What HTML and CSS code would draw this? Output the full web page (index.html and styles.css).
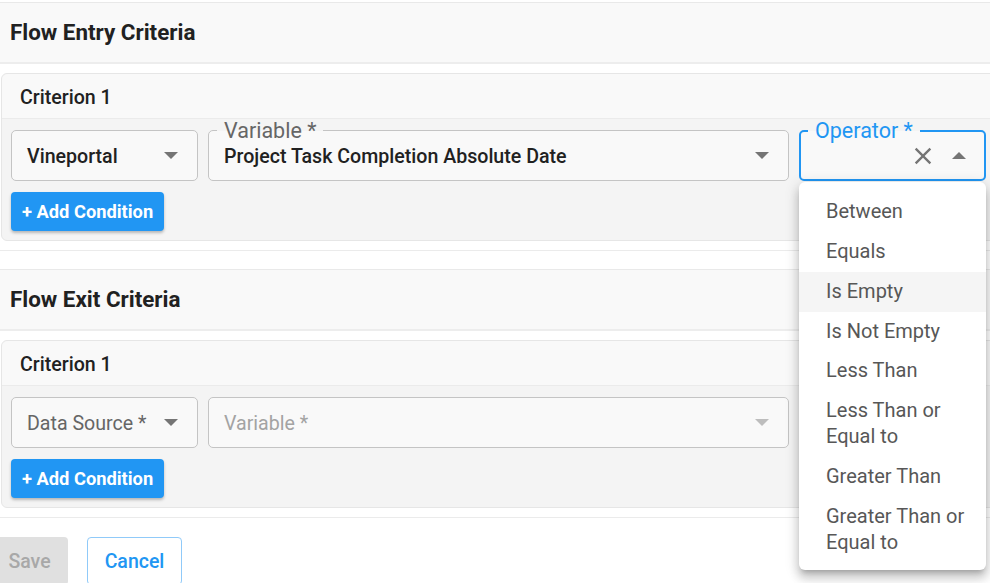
FILE: index.html
```html
<!DOCTYPE html>
<html lang="en">
<head>
<meta charset="utf-8">
<title>Flow Criteria</title>
<link rel="stylesheet" href="styles.css">
</head>
<body>
<div class="page">
  <section class="section">
    <div class="section-head"><h2 class="section-title">Flow Entry Criteria</h2></div>
    <div class="section-body">
      <div class="criterion">
        <div class="crit-head">Criterion 1</div>
        <div class="crit-body">
          <div class="fields">
            <div class="field">
              <span class="value">Vineportal</span>
              <span class="arrow-down"></span>
            </div>
            <div class="field">
              <span class="label">Variable *</span>
              <span class="value">Project Task Completion Absolute Date</span>
              <span class="arrow-down"></span>
            </div>
            <div class="field field-focus">
              <span class="label label-focus">Operator *</span>
              <svg class="clear-icon" width="28" height="28" viewBox="0 0 24 24"><path d="M19 6.41 17.59 5 12 10.59 6.41 5 5 6.41 10.59 12 5 17.59 6.41 19 12 13.41 17.59 19 19 17.59 13.41 12z" fill="#757575"/></svg>
              <span class="arrow-up"></span>
              <ul class="menu">
                <li class="menu-item">Between</li>
                <li class="menu-item">Equals</li>
                <li class="menu-item menu-item-hover">Is Empty</li>
                <li class="menu-item">Is Not Empty</li>
                <li class="menu-item">Less Than</li>
                <li class="menu-item">Less Than or Equal to</li>
                <li class="menu-item">Greater Than</li>
                <li class="menu-item">Greater Than or Equal to</li>
              </ul>
            </div>
          </div>
          <button class="add-btn">+ Add Condition</button>
        </div>
      </div>
    </div>
  </section>

  <section class="section">
    <div class="section-head"><h2 class="section-title">Flow Exit Criteria</h2></div>
    <div class="section-body">
      <div class="criterion">
        <div class="crit-head">Criterion 1</div>
        <div class="crit-body">
          <div class="fields">
            <div class="field">
              <span class="value placeholder">Data Source *</span>
              <span class="arrow-down"></span>
            </div>
            <div class="field">
              <span class="value placeholder-disabled">Variable *</span>
              <span class="arrow-down arrow-disabled"></span>
            </div>
            <div class="field-empty"></div>
          </div>
          <button class="add-btn">+ Add Condition</button>
        </div>
      </div>
    </div>
  </section>

  <div class="actions">
    <button class="btn-save">Save</button>
    <button class="btn-cancel">Cancel</button>
  </div>
</div>
</body>
</html>
```
FILE: styles.css
```css
html, body {
  margin: 0;
  padding: 0;
  overflow: hidden;
  background: #ffffff;
}
body {
  font-family: Roboto, "Liberation Sans", sans-serif;
  color: #212121;
}
.page {
  width: 997px;
  padding-top: 2px;
}
.section {
  border-top: 1px solid #e9e9e9;
  border-bottom: 1px solid #ebebeb;
  background: #ffffff;
}
.section + .section {
  margin-top: 18px;
}
.section-head {
  background: #f9f9f9;
  height: 59px;
  box-sizing: content-box;
  display: flex;
  align-items: center;
  padding-left: 10px;
  border-bottom: 2px solid #ededed;
}
.section-title {
  margin: 0 0 2px;
  font-size: 22.4px;
  font-weight: 700;
  color: #212121;
}
.section-body {
  padding: 9px 0 9px 1px;
}
.criterion {
  border: 1px solid #e6e6e6;
  border-radius: 6px;
  background: #f4f4f4;
}
.crit-head {
  height: 45px;
  box-sizing: border-box;
  display: flex;
  align-items: center;
  padding: 2px 0 0 18px;
  background: #f9f9f9;
  border-bottom: 1px solid #ebebeb;
  border-radius: 6px 6px 0 0;
  font-size: 19.6px;
  font-weight: 500;
  color: #212121;
}
.crit-body {
  padding: 11px 9px 9px 9px;
  display: flex;
  flex-direction: column;
  align-items: flex-start;
  gap: 11px;
}
.fields {
  display: grid;
  grid-template-columns: 187px 581px 187px;
  gap: 10px;
}
.field {
  position: relative;
  height: 51px;
  box-sizing: border-box;
  border: 1px solid #c4c4c4;
  border-radius: 5px;
  background: #f9f9f9;
  display: flex;
  align-items: center;
  padding: 0 19px 0 15px;
}
.field-focus {
  border: 2px solid #2196f3;
  padding: 0 18px 0 14px;
  z-index: 5;
}
.value {
  font-size: 19.6px;
  font-weight: 500;
  color: #212121;
  white-space: nowrap;
  padding-top: 2px;
}
.placeholder {
  font-weight: 400;
  color: #666666;
}
.placeholder-disabled {
  font-weight: 400;
  color: #a3a3a3;
}
.label {
  position: absolute;
  top: -12px;
  left: 8px;
  padding: 0 7px;
  font-size: 21.5px;
  line-height: 24px;
  color: #666666;
  background: linear-gradient(#f4f4f4 0 50%, #f9f9f9 50% 100%);
  white-space: nowrap;
}
.label-focus {
  top: -13px;
  left: 7px;
  color: #2196f3;
}
.arrow-down {
  margin-left: auto;
  width: 0;
  height: 0;
  border-left: 7px solid transparent;
  border-right: 7px solid transparent;
  border-top: 7px solid #757575;
}
.arrow-disabled {
  border-top-color: #bdbdbd;
}
.arrow-up {
  width: 0;
  height: 0;
  margin-left: 15px;
  border-left: 7px solid transparent;
  border-right: 7px solid transparent;
  border-bottom: 7px solid #757575;
}
.clear-icon {
  margin-left: auto;
  display: block;
}
.menu {
  position: absolute;
  top: 50px;
  left: -2px;
  width: 187px;
  box-sizing: border-box;
  margin: 0;
  padding: 10px 0 8px;
  list-style: none;
  background: #ffffff;
  border-radius: 6px;
  box-shadow: 0 5px 5px -3px rgba(0,0,0,.2), 0 8px 10px 1px rgba(0,0,0,.14), 0 3px 14px 2px rgba(0,0,0,.12);
}
.menu-item {
  padding: 7px 16px 7px 27px;
  font-size: 20px;
  line-height: 25.85px;
  color: #575757;
}
.menu-item-hover {
  background: #f5f5f5;
}
.add-btn {
  height: 39px;
  padding: 0 11px;
  border: none;
  border-radius: 4px;
  background: #2196f3;
  color: #ffffff;
  font-family: inherit;
  font-size: 18.3px;
  font-weight: 700;
  box-shadow: 0 2px 3px rgba(0,0,0,.25);
}
.actions {
  display: flex;
  gap: 19px;
  margin-top: 19px;
}
.btn-save {
  width: 77px;
  margin-left: -9px;
  height: 48px;
  border: none;
  border-radius: 4px;
  background: #e0e0e0;
  color: #a8a8a8;
  font-family: inherit;
  font-size: 19.5px;
  font-weight: 500;
}
.btn-cancel {
  width: 95px;
  height: 48px;
  border: 1px solid #90caf9;
  border-radius: 4px;
  background: #ffffff;
  color: #2196f3;
  font-family: inherit;
  font-size: 19.5px;
  font-weight: 500;
}
```
